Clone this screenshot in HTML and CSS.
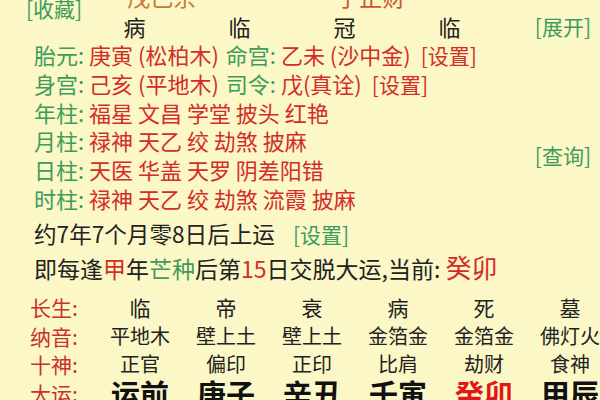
FILE: index.html
```html
<!DOCTYPE html>
<html lang="zh">
<head>
<meta charset="utf-8">
<link rel="stylesheet" href="styles.css">
</head>
<body>
<div class="page">
  <div class="toprow">
    <span class="link fav">[收藏]</span>
    <span class="clip c1">戊己余</span>
    <span class="clip c2">子正财</span>
  </div>
  <div class="stars">
    <span class="star">病</span>
    <span class="star">临</span>
    <span class="star">冠</span>
    <span class="star">临</span>
    <span class="link expand">[展开]</span>
  </div>
  <div class="info">
    <div class="line"><span class="g">胎元: </span><span class="r">庚寅 (松柏木)</span><span class="g sp">命宫: </span><span class="r">乙未 (沙中金)</span><span class="r set2">[设置]</span></div>
    <div class="line"><span class="g">身宫: </span><span class="r">己亥 (平地木)</span><span class="g sp">司令: </span><span class="r">戊(真诠)</span><span class="r set2">[设置]</span></div>
    <div class="line"><span class="g">年柱: </span><span class="r">福星 文昌 学堂 披头 红艳</span></div>
    <div class="line"><span class="g">月柱: </span><span class="r">禄神 天乙 绞 劫煞 披麻</span></div>
    <div class="line"><span class="g">日柱: </span><span class="r">天医 华盖 天罗 阴差阳错</span></div>
    <div class="line"><span class="g">时柱: </span><span class="r">禄神 天乙 绞 劫煞 流霞 披麻</span></div>
    <span class="link query">[查询]</span>
  </div>
  <div class="yun">约7年7个月零8日后上运<span class="link set">[设置]</span></div>
  <div class="jiao">即每逢<span class="r">甲</span>年<span class="g">芒种</span>后第<span class="r">15</span>日交脱大运,当前: <span class="r cur">癸卯</span></div>
  <div class="table">
    <span class="lab">长生:</span><span class="cs">临</span><span class="cs">帝</span><span class="cs">衰</span><span class="cs">病</span><span class="cs">死</span><span class="cs">墓</span>
    <span class="lab">纳音:</span><span>平地木</span><span>壁上土</span><span>壁上土</span><span>金箔金</span><span>金箔金</span><span>佛灯火</span>
    <span class="lab">十神:</span><span>正官</span><span>偏印</span><span>正印</span><span>比肩</span><span>劫财</span><span>食神</span>
    <span class="lab">大运:</span><span class="dy">运前</span><span class="dy">庚子</span><span class="dy">辛丑</span><span class="dy">壬寅</span><span class="dy red">癸卯</span><span class="dy">甲辰</span>
  </div>
</div>
</body>
</html>
```

FILE: styles.css
```css
html, body {
  margin: 0;
  padding: 0;
  background: #fbf7c6;
}
body {
  font-family: "Noto Sans CJK SC", "Noto Sans", sans-serif;
  color: #222;
  width: 600px;
  height: 400px;
  overflow: hidden;
}
.page {
  display: flex;
  flex-direction: column;
}
.link { color: #3d9c5c; }
.g { color: #3d9c5c; }
.r { color: #d42c2a; }

/* clipped top line */
.toprow {
  display: flex;
  align-items: flex-start;
  height: 12px;
  padding-left: 26px;
  position: relative;
  z-index: 1;
}
.fav {
  font-size: 21px;
  line-height: 20px;
  margin-top: -2px;
  flex: none;
}
.clip {
  font-size: 23px;
  line-height: 26px;
  margin-top: -17px;
  flex: none;
}
.c1 { margin-left: 45px; color: #c8783a; }
.c2 { margin-left: 140px; color: #cf532c; }

/* stars row */
.stars {
  display: grid;
  grid-template-columns: repeat(4, 105px) 1fr;
  align-items: center;
  padding-left: 82px;
  padding-right: 9px;
  font-size: 22px;
  line-height: 28px;
}
.star { text-align: center; }
.expand {
  justify-self: end;
  font-size: 21px;
}

/* info rows */
.info {
  display: grid;
  grid-template-columns: 1fr auto;
  grid-auto-rows: 28.8px;
  padding-left: 34px;
  padding-right: 9px;
  font-size: 22px;
  line-height: 28.8px;
}
.line {
  grid-column: 1;
  white-space: pre;
}
.sp { margin-left: 7px; }
.set2 { margin-left: 10px; font-size: 21px; }
.query {
  grid-column: 2;
  grid-row: 4 / span 2;
  align-self: center;
  font-size: 21px;
}

.yun {
  margin-top: 6px;
  padding-left: 34px;
  font-size: 22.6px;
  line-height: 30px;
}
.set {
  margin-left: 18px;
  font-size: 21px;
}
.jiao {
  padding-left: 34px;
  font-size: 23px;
  line-height: 36px;
  white-space: nowrap;
}
.cur { font-size: 26px; }

/* bottom table */
.table {
  margin-top: 7px;
  display: grid;
  grid-template-columns: 67px repeat(6, 86px);
  grid-auto-rows: 28.5px;
  padding-left: 30px;
  font-size: 20px;
  line-height: 24px;
  align-items: center;
}
.table span { text-align: center; white-space: nowrap; }
.table .lab {
  color: #cc2f2c;
  text-align: left;
  font-size: 21px;
}
.table .cs { font-size: 21px; }
.table .dy {
  font-size: 29px;
  line-height: 28px;
  font-weight: bold;
  color: #111;
}
.table .dy.red { color: #e01818; }
```
